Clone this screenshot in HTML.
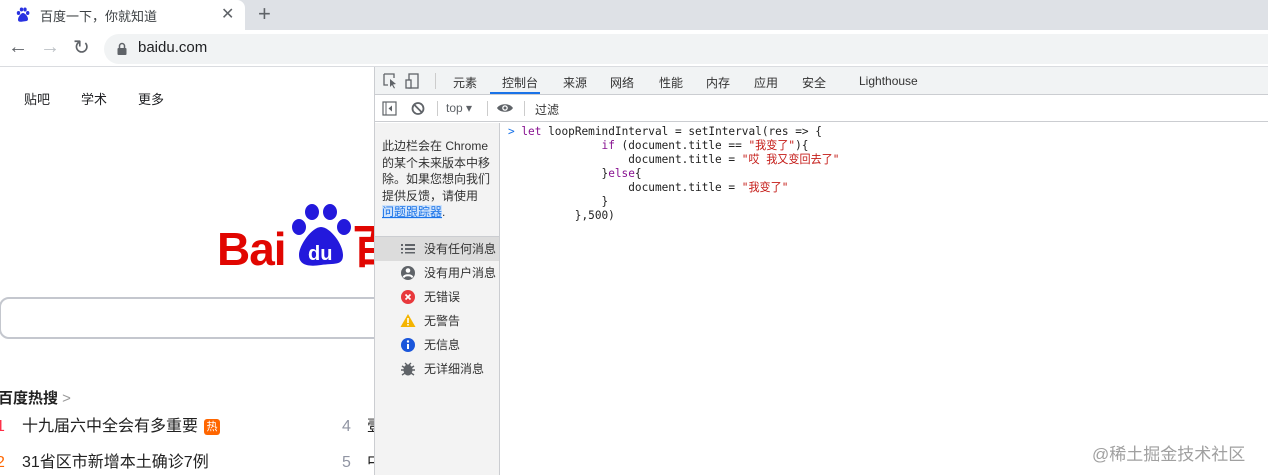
<!DOCTYPE html>
<html><head><meta charset="utf-8"><style>
*{margin:0;padding:0;box-sizing:border-box}
body{width:1268px;height:475px;overflow:hidden;background:#fff;font-family:"Liberation Sans","Noto Sans CJK SC",sans-serif;position:relative;color:#202124}
.a{position:absolute}
.mono{font-family:"DejaVu Sans Mono","Liberation Mono","Noto Sans CJK SC",monospace;font-size:11.1px;white-space:pre}
</style></head><body>
<div class="a" style="left:0;top:0;width:1268px;height:30px;background:#dee1e6"></div>
<div class="a" style="left:0;top:0;width:245px;height:31px;background:#fff;border-radius:0 8px 0 0"></div>
<svg class="a" style="left:16px;top:7px" width="14" height="15" viewBox="0 0 14 15"><g fill="#2932e1"><ellipse cx="2.5" cy="6" rx="1.7" ry="2"/><ellipse cx="5.5" cy="2.5" rx="1.7" ry="2"/><ellipse cx="9" cy="2.5" rx="1.7" ry="2"/><ellipse cx="11.7" cy="6" rx="1.7" ry="2"/><path d="M7 6c-2 0-5 4-5 6.5S4 15 7 14.5 12 14.5 12 12 9 6 7 6z"/></g></svg>
<div class="a" style="left:40px;top:6px;font-size:13px;color:#3c4043">百度一下，你就知道</div>
<div class="a" style="left:221px;top:4px;font-size:16px;color:#5f6368">✕</div>
<div class="a" style="left:258px;top:1px;font-size:22px;color:#5f6368">+</div>
<div class="a" style="left:0;top:30px;width:1268px;height:37px;background:#fff;border-bottom:1px solid #dadce0"></div>
<div class="a" style="left:8px;top:36px;font-size:20px;color:#5f6368">←</div>
<div class="a" style="left:40px;top:36px;font-size:20px;color:#bdc1c6">→</div>
<div class="a" style="left:73px;top:35px;font-size:20px;color:#5f6368">↻</div>
<div class="a" style="left:104px;top:34px;width:1180px;height:30px;background:#f1f3f4;border-radius:15px"></div>
<svg class="a" style="left:117px;top:42px" width="10" height="13" viewBox="0 0 10 13"><path d="M2.5 6V4a2.5 2.5 0 015 0v2" stroke="#5f6368" stroke-width="1.5" fill="none"/><rect x="0.5" y="6" width="9" height="7" rx="1" fill="#5f6368"/></svg>
<div class="a" style="left:138px;top:39px;font-size:15px;color:#202124">baidu.com</div>
<div class="a" style="left:24px;top:89px;font-size:13px">贴吧</div>
<div class="a" style="left:81px;top:89px;font-size:13px">学术</div>
<div class="a" style="left:138px;top:89px;font-size:13px">更多</div>
<div class="a" style="left:217px;top:226px;font-size:46px;font-weight:bold;color:#e10601;letter-spacing:-1px;line-height:1">Bai</div>
<svg class="a" style="left:290px;top:202px" width="64" height="66" viewBox="0 0 64 66"><g fill="#2319dc"><ellipse cx="9" cy="25" rx="7" ry="8"/><ellipse cx="22" cy="10" rx="7" ry="8"/><ellipse cx="40" cy="10" rx="7" ry="8"/><ellipse cx="54" cy="25" rx="7" ry="8"/><path d="M31 25c-9 0-22 18-22 28s9 12 22 10 22 1 22-10S40 25 31 25z"/></g><text x="18" y="58" fill="#fff" font-family="Liberation Sans" font-weight="bold" font-size="20">du</text></svg>
<div class="a" style="left:352px;top:224px;font-size:46px;font-weight:bold;color:#e10601;line-height:1">百</div>
<div class="a" style="left:-1px;top:297px;width:400px;height:42px;border:2px solid #c4c7ce;border-radius:10px"></div>
<div class="a" style="left:-2px;top:387px;font-size:15px;font-weight:bold;color:#222">百度热搜 <span style="font-weight:normal;color:#999">&gt;</span></div>
<div class="a" style="left:-4px;top:417px;font-size:16px;line-height:20px;color:#fe2d46">1</div>
<div class="a" style="left:22px;top:417px;font-size:16px;line-height:20px;color:#222">十九届六中全会有多重要</div>
<div class="a" style="left:204px;top:419px;width:16px;height:16px;background:#ff6600;border-radius:3px;color:#fff;font-size:11px;text-align:center;line-height:16px">热</div>
<div class="a" style="left:-4px;top:453px;font-size:16px;line-height:20px;color:#f60">2</div>
<div class="a" style="left:22px;top:453px;font-size:16px;line-height:20px;color:#222">31省区市新增本土确诊7例</div>
<div class="a" style="left:342px;top:417px;font-size:16px;line-height:20px;color:#9195a3">4</div>
<div class="a" style="left:342px;top:453px;font-size:16px;line-height:20px;color:#9195a3">5</div>
<div class="a" style="left:367px;top:417px;font-size:16px;line-height:20px;color:#222">壹</div>
<div class="a" style="left:367px;top:453px;font-size:16px;line-height:20px;color:#222">中</div>
<div class="a" style="left:374px;top:67px;width:894px;height:408px;background:#fff;border-left:1px solid #cbcdd1"></div>
<div class="a" style="left:375px;top:67px;width:893px;height:28px;background:#f1f3f4;border-bottom:1px solid #cbcdd1"></div>
<svg class="a" style="left:383px;top:73px" width="40" height="16" viewBox="0 0 40 16"><path d="M1 1h10v4M1 1v11h4" stroke="#5f6368" fill="none" stroke-width="1.3"/><path d="M7 6l6 5-3 .5 2 3.5-1 .5-2-3.5-2 2z" fill="#5f6368"/><rect x="26" y="1" width="9" height="14" stroke="#5f6368" fill="none" stroke-width="1.3"/><rect x="23" y="7" width="5" height="8" fill="#f1f3f4" stroke="#5f6368" stroke-width="1.3"/></svg>
<div class="a" style="left:435px;top:73px;width:1px;height:16px;background:#ccc"></div>
<div class="a" style="left:0;top:74px;font-size:12px;color:#333;width:940px">
<span class="a" style="left:453px">元素</span><span class="a" style="left:502px">控制台</span><span class="a" style="left:563px">来源</span><span class="a" style="left:610px">网络</span><span class="a" style="left:659px">性能</span><span class="a" style="left:706px">内存</span><span class="a" style="left:754px">应用</span><span class="a" style="left:802px">安全</span><span class="a" style="left:859px">Lighthouse</span></div>
<div class="a" style="left:490px;top:92px;width:50px;height:2px;background:#1a73e8"></div>
<div class="a" style="left:375px;top:95px;width:893px;height:27px;background:#fff;border-bottom:1px solid #cbcdd1"></div>
<svg class="a" style="left:382px;top:101px" width="50" height="15" viewBox="0 0 50 15"><rect x="1" y="1" width="13" height="13" stroke="#5f6368" fill="none" stroke-width="1.2"/><path d="M4 1v13" stroke="#5f6368"/><path d="M10 4.5v6l-3.5-3z" fill="#5f6368"/><circle cx="36" cy="7.5" r="5.5" stroke="#5f6368" fill="none" stroke-width="1.8"/><path d="M32 3.5l8 8" stroke="#5f6368" stroke-width="1.8"/></svg>
<div class="a" style="left:437px;top:101px;width:1px;height:15px;background:#ccc"></div>
<div class="a" style="left:446px;top:101px;font-size:12px;color:#5f6368">top ▾</div>
<div class="a" style="left:487px;top:101px;width:1px;height:15px;background:#ccc"></div>
<svg class="a" style="left:496px;top:102px" width="18" height="12" viewBox="0 0 18 12"><path d="M1 6C4 1 14 1 17 6 14 11 4 11 1 6z" fill="#5f6368"/><circle cx="9" cy="6" r="2.8" fill="#fff"/><circle cx="9" cy="6" r="1.5" fill="#5f6368"/></svg>
<div class="a" style="left:524px;top:101px;width:1px;height:15px;background:#ccc"></div>
<div class="a" style="left:535px;top:101px;font-size:12px;color:#333">过滤</div>
<div class="a" style="left:375px;top:123px;width:125px;height:352px;background:#f3f3f3;border-right:1px solid #cbcdd1"></div>
<div class="a" style="left:382px;top:138px;font-size:12px;line-height:16.5px;color:#333;white-space:nowrap">此边栏会在 Chrome<br>的某个未来版本中移<br>除。如果您想向我们<br>提供反馈，请使用<br><span style="color:#1a73e8;text-decoration:underline;background:#cfe3fb">问题跟踪器</span>.</div>
<div class="a" style="left:375px;top:237px;width:124px;height:24px;background:#dcdcdc"></div>
<div class="a" style="left:375px;top:236px;width:124px;height:1px;background:#cbcdd1"></div>
<div class="a" style="left:424px;top:237px;font-size:12px;line-height:24px;color:#333;white-space:nowrap">
<div>没有任何消息</div><div>没有用户消息</div><div>无错误</div><div>无警告</div><div>无信息</div><div>无详细消息</div></div>
<svg class="a" style="left:400px;top:241px" width="16" height="135" viewBox="0 0 16 135"><g fill="#5f6368"><rect x="1" y="3" width="2" height="2"/><rect x="5" y="3" width="10" height="2"/><rect x="1" y="7" width="2" height="2"/><rect x="5" y="7" width="10" height="2"/><rect x="1" y="11" width="2" height="1.5"/><rect x="5" y="11" width="10" height="1.5"/><circle cx="8" cy="32" r="7"/></g><circle cx="8" cy="29.5" r="2.3" fill="#fff"/><path d="M3.5 36.5c1-3 8-3 9 0" stroke="#fff" stroke-width="2" fill="none"/><circle cx="8" cy="56" r="7" fill="#e8383c"/><path d="M5.5 53.5l5 5M10.5 53.5l-5 5" stroke="#fff" stroke-width="1.6"/><path d="M8 73l7.5 13h-15z" fill="#f4b400"/><rect x="7.2" y="77" width="1.6" height="5" fill="#fff"/><rect x="7.2" y="83" width="1.6" height="1.5" fill="#fff"/><circle cx="8" cy="104" r="7" fill="#1a56db"/><rect x="7" y="103" width="2" height="5" fill="#fff"/><circle cx="8" cy="100.5" r="1.2" fill="#fff"/><ellipse cx="8" cy="129" rx="4.5" ry="5.5" fill="#5f6368"/><path d="M2 125l3 2M14 125l-3 2M1 129h3M12 129h3M2 134l3-2M14 134l-3-2M5 122l2 2M11 122l-2 2" stroke="#5f6368" stroke-width="1.4"/></svg>
<div class="a mono" style="left:508px;top:125px;line-height:14px;color:#222"><span style="color:#1a73e8">&gt;</span> <span style="color:#881391">let</span> loopRemindInterval = setInterval(res =&gt; {
              <span style="color:#881391">if</span> (document.title == <span style="color:#c41a16">"我变了"</span>){
                  document.title = <span style="color:#c41a16">"哎 我又变回去了"</span>
              }<span style="color:#881391">else</span>{
                  document.title = <span style="color:#c41a16">"我变了"</span>
              }
          },500)</div>
<div class="a" style="left:1092px;top:440px;font-size:17px;color:#a0a0a0">@稀土掘金技术社区</div>
</body></html>
